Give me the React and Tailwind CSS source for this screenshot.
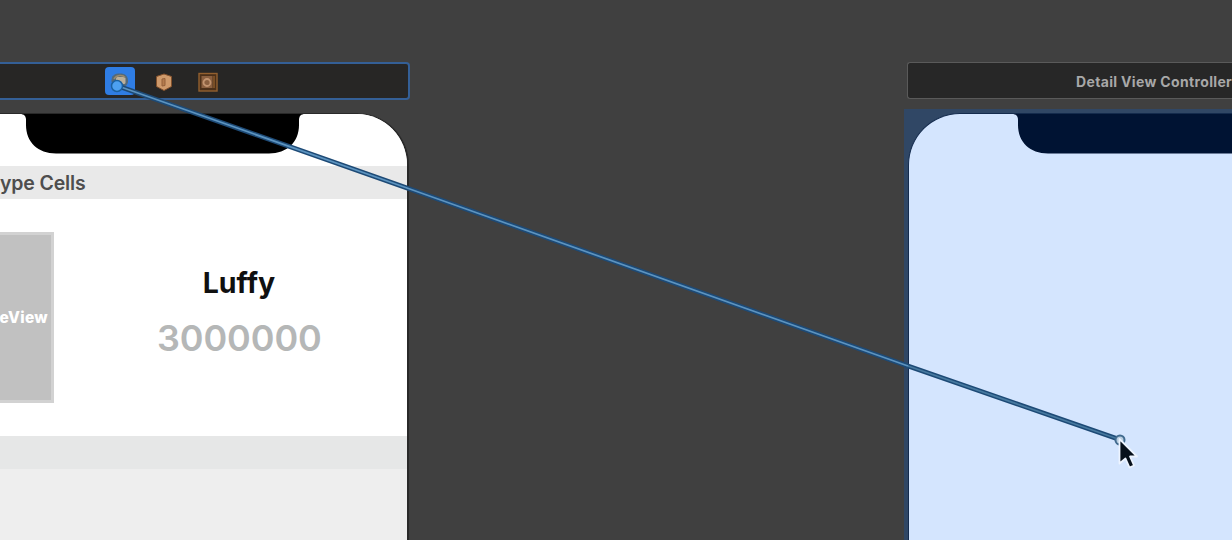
const Notch = ({ className }) => (
    <svg className={className} width="285" height="40" viewBox="0 0 285 40" fill="currentColor" aria-hidden="true">
        <path d="M0 0H285C281 0 279 2 279 6V11C279 28 267 39.500 249 39.500H36C18 39.500 6 28 6 11V6C6 2 4 0 0 0Z" />
    </svg>
);

const ControllerIcon = () => (
    <svg width="30" height="28" viewBox="0 0 30 28" fill="none" aria-hidden="true">
        <rect width="30" height="28" rx="4" fill="#2f7de4" />
        <path d="M6.500 15C6 8 10 6.500 15 6.500C20 6.500 23.500 9 23 15C22.500 18 20 20 17 20H11Z" fill="#53697a" />
        <rect x="11" y="10" width="9.500" height="7" rx="1.500" fill="#bcb09a" />
        <path d="M9 12C11 7.500 18 7.500 20 10.500" stroke="#9a8a6b" strokeWidth="1.500" />
    </svg>
);

const ResponderIcon = () => (
    <svg width="20" height="20" viewBox="0 0 20 20" fill="none" aria-hidden="true">
        <path d="M10 2L17.500 4.500V14.500L10 18.500L2.500 14.500V4.500Z" fill="#cf9a6b" stroke="#82502b" strokeLinejoin="round" />
        <path d="M8 7L11 6.500V13.500L8 14Z" fill="#b47b4c" stroke="#94603a" />
    </svg>
);

const ExitIcon = () => (
    <svg width="20" height="20" viewBox="0 0 20 20" fill="none" aria-hidden="true">
        <rect x="1" y="1.500" width="18" height="17.500" fill="#4c3019" stroke="#93602f" strokeWidth="1.400" />
        <rect x="3.500" y="4" width="11" height="12" fill="#8b6040" />
        <circle cx="9" cy="10.500" r="3.500" stroke="#c29470" strokeWidth="1.800" />
        <path d="M16 4V16" stroke="#93602f" strokeWidth="1.300" />
    </svg>
);

const TableScene = () => (
    <section className="w-[410px] shrink-0">
        <header className="flex h-[38px] items-center gap-[19px] rounded-r-[4px] border-y-2 border-r-2 border-[#345f96] bg-[#272625] pl-[105px]">
            <ControllerIcon />
            <div className="flex gap-6 pt-px">
                <ResponderIcon />
                <ExitIcon />
            </div>
        </header>

        <div className="mt-[13px] h-[430px] w-[409px] overflow-hidden rounded-tr-[52px] border-t border-r-2 border-[#292929] bg-[#eeeeee]">
            <div className="h-[52px] bg-white">
                <Notch className="ml-5 text-black" />
            </div>
            <div className="flex h-[33px] items-center bg-[#e9e9e9] pt-[3px] text-[19.5px] font-semibold tracking-[-0.15px] whitespace-nowrap text-[#4e4e4e]">
                ype Cells
            </div>

            {/* Prototype cell */}
            <div className="flex h-[237px] items-start bg-white pt-[33px]">
                <div className="flex h-[171px] w-[54px] items-center justify-end border-y-3 border-r-3 border-[#d2d2d2] bg-[#c1c1c1] pt-px pr-[3px] text-[15.5px] font-extrabold tracking-[0.3px] text-white">
                    eView
                </div>
                <div className="ml-[103px] w-[164px] pt-[34px] text-center">
                    <div className="h-[34px] text-[28.500px] leading-[34px] font-bold text-[#101010]">Luffy</div>
                    <div className="mt-4 h-[44px] text-[36px] leading-[44px] font-semibold tracking-[-0.1px] whitespace-nowrap text-[#b5b7b7]">3000000</div>
                </div>
            </div>
            <div className="h-[33px] bg-[#e6e7e7]" />
        </div>
    </section>
);

const DetailScene = () => (
    <section className="flex-1">
        <header className="ml-[3px] flex h-[37px] items-center rounded-l-[3px] border-y border-l border-[#5a5a5a] bg-[#272727] pt-px pl-[168px] text-[14px] font-bold tracking-[0.34px] whitespace-nowrap text-[#a8a8a8]">
            Detail View Controller
        </header>
        <div className="mt-[10px] h-[435px] bg-[#304765] pt-1 pl-1">
            <div className="h-full overflow-hidden rounded-tl-[52px] border-t border-l border-[#142b4d] bg-[#d4e5fe]">
                <Notch className="ml-[103px] text-[#001333]" />
            </div>
        </div>
    </section>
);

// Drag line that runs across both scenes
const SegueConnection = () => (
    <svg className="pointer-events-none absolute inset-0" width="1232" height="540" viewBox="0 0 1232 540" fill="none" aria-hidden="true">
        <path d="M118 86L407 188L908 366L1118 439" stroke="#1d4a76" strokeWidth="4.800" />
        <path d="M118 86L407 188L908 366" stroke="#5c93bf" strokeWidth="1.700" />
        <path d="M908 366L1118 439" stroke="#47799f" strokeWidth="1.700" />
        <circle cx="117" cy="86" r="5.500" fill="#4da0f0" stroke="#1b609f" strokeWidth="1.500" />
        <circle cx="1120" cy="440" r="4.500" fill="#b8cde0" stroke="#416b8f" strokeWidth="2" />
        <path d="M1119.500 439V463.500L1125.500 458.500L1129.500 467.500L1134 465.500L1130 456.500H1137Z" fill="#07101b" stroke="#edf4ff" strokeWidth="1.800" strokeLinejoin="round" />
    </svg>
);

const App = () => {
    return (
        <main className="relative flex h-[540px] w-[1232px] gap-[494px] overflow-hidden bg-[#404040] pt-[62px] font-['Inter',sans-serif]">
            <TableScene />
            <DetailScene />
            <SegueConnection />
        </main>
    );
};

export default App;
